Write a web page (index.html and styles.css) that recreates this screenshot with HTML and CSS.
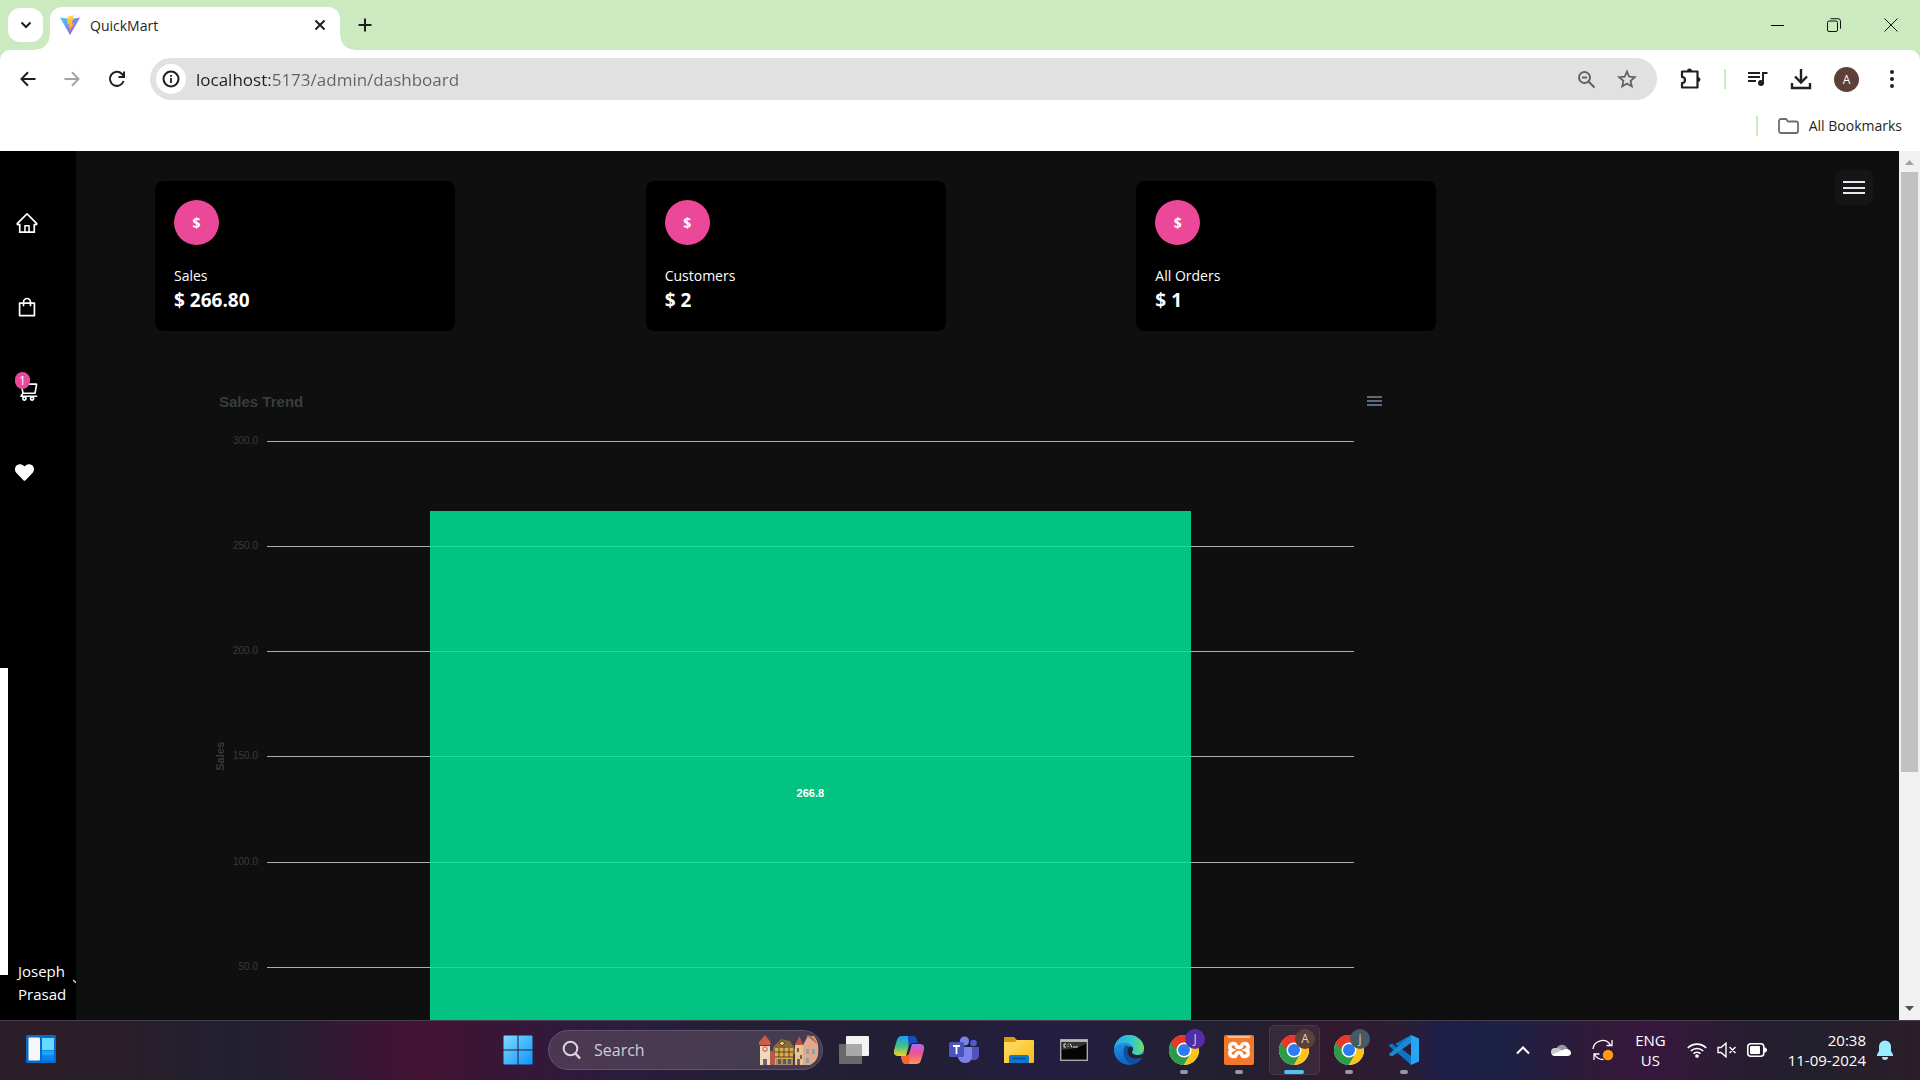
FILE: index.html
```html
<!DOCTYPE html>
<html lang="en">
<head>
<meta charset="utf-8">
<meta name="viewport" content="width=device-width, initial-scale=1">
<title>QuickMart</title>
<link rel="stylesheet" href="styles.css">
</head>
<body>
<svg class="defs" aria-hidden="true">
  <defs>
    <linearGradient id="viteBody" x1="0" y1="0" x2="1" y2="1"><stop offset="0" stop-color="#41d1ff"/><stop offset="1" stop-color="#bd34fe"/></linearGradient>
    <linearGradient id="viteBolt" x1="0" y1="0" x2="0" y2="1"><stop offset="0" stop-color="#ffea83"/><stop offset=".3" stop-color="#ffc91f"/><stop offset="1" stop-color="#ffa800"/></linearGradient>
    <linearGradient id="winGrad" x1="0" y1="0" x2="1" y2="1"><stop offset="0" stop-color="#7fdcff"/><stop offset="1" stop-color="#0a94fb"/></linearGradient>
    <linearGradient id="copilotLeft" x1="0" y1="0" x2="0" y2="1"><stop offset="0" stop-color="#1b9df0"/><stop offset=".5" stop-color="#3fbf8f"/><stop offset="1" stop-color="#f5d21c"/></linearGradient>
    <linearGradient id="copilotRight" x1="0" y1="0" x2="0" y2="1"><stop offset="0" stop-color="#b266f0"/><stop offset=".5" stop-color="#f0558a"/><stop offset="1" stop-color="#fd9a5a"/></linearGradient>
    <linearGradient id="folderGrad" x1="0" y1="0" x2="1" y2="1"><stop offset="0" stop-color="#ffe06a"/><stop offset="1" stop-color="#fbb917"/></linearGradient>
    <linearGradient id="edgeTop" x1="0" y1="0" x2="1" y2="0"><stop offset="0" stop-color="#2aa8e8"/><stop offset=".6" stop-color="#32c6cf"/><stop offset="1" stop-color="#6be35c"/></linearGradient>
    <linearGradient id="edgeSide" x1="0" y1="0" x2="0" y2="1"><stop offset="0" stop-color="#2aa3ea"/><stop offset="1" stop-color="#0a62c4"/></linearGradient>
    <symbol id="chrome" viewBox="0 0 48 48">
      <circle cx="24" cy="24" r="24" fill="#fff"/>
      <path d="M24 24 3.2 12A24 24 0 0 1 44.8 12Z" fill="#e8382b"/>
      <path d="M3.2 12A24 24 0 0 0 24 48L34.4 30 24 24Z" fill="#2d9c4a"/>
      <path d="M44.8 12A24 24 0 0 1 24 48L34.4 30 24 12Z" fill="#fcc419"/>
      <path d="M3.2 12 13.6 30 24 24 24 12Z" fill="#2d9c4a"/>
      <path d="M3.2 12A24 24 0 0 1 44.8 12H24L13.6 18 9 21Z" fill="#e8382b"/>
      <circle cx="24" cy="24" r="12" fill="#fff"/>
      <circle cx="24" cy="24" r="9.6" fill="#2d7bee"/>
    </symbol>
  </defs>
</svg>

<header class="browser">
  <div class="tab-strip">
    <button class="tab-search" aria-label="Search tabs"><svg width="12" height="12" viewBox="0 0 12 12"><path d="M1.500 3.500 6 8l4.500-4.500" fill="none" stroke="#1f1f1f" stroke-width="2"/></svg></button>
    <div class="tab">
      <svg width="20" height="20" viewBox="0 0 20 20"><path d="M0 2.500 10 20 20 2.500 11 4Z" fill="url(#viteBody)"/><path d="m14.500 0-7 1.400L7 9.500l2.300-.5-.7 3.400 1.700-.5-1 4.800 4.700-8.400-2.400.5Z" fill="url(#viteBolt)"/></svg>
      <span class="tab-title">QuickMart</span>
      <button class="plain" aria-label="Close tab"><svg width="12" height="12" viewBox="0 0 12 12"><path d="m1.500 1.500 9 9m0-9-9 9" stroke="#1f1f1f" stroke-width="2"/></svg></button>
    </div>
    <button class="plain new-tab" aria-label="New tab"><svg width="14" height="14" viewBox="0 0 14 14"><path d="M7 .5v13M.5 7h13" stroke="#1f1f1f" stroke-width="2"/></svg></button>
    <div class="window-controls">
      <button class="plain" aria-label="Minimise"><svg width="13" height="13" viewBox="0 0 13 13"><path d="M0 6.500h13" stroke="#000"/></svg></button>
      <button class="plain" aria-label="Restore"><svg width="14" height="14" viewBox="0 0 14 14" fill="none" stroke="#111"><rect x=".5" y="3" width="10" height="10.500" rx="1.500"/><path d="M3.500.7h7.500a2.500 2.500 0 0 1 2.500 2.500v7.500"/></svg></button>
      <button class="plain" aria-label="Close"><svg width="14" height="14" viewBox="0 0 14 14"><path d="m.5.5 13 13m0-13-13 13" stroke="#111"/></svg></button>
    </div>
  </div>

  <div class="toolbar">
    <nav class="nav-buttons" aria-label="Navigation">
      <button class="plain" aria-label="Back"><svg width="16" height="16" viewBox="0 0 16 16" fill="none" stroke="#1f1f1f" stroke-width="2"><path d="M15.500 8H2M8 1.300 1.500 8 8 14.700"/></svg></button>
      <button class="plain" aria-label="Forward" disabled><svg width="16" height="16" viewBox="0 0 16 16" fill="none" stroke="#a3a3a3" stroke-width="2"><path d="M.5 8H14M8 1.300 14.500 8 8 14.700"/></svg></button>
      <button class="plain" aria-label="Reload"><svg width="18" height="18" viewBox="0 0 18 18" fill="none" stroke="#1f1f1f" stroke-width="2"><path d="M15.600 11A7 7 0 1 1 14 4l1.500 1.700M16 1.500V7h-5.500"/></svg></button>
    </nav>
    <div class="address">
      <button class="site-info" aria-label="Site information"><svg width="18" height="18" viewBox="0 0 18 18"><circle cx="9" cy="9" r="7.500" fill="none" stroke="#1f1f1f" stroke-width="2"/><path d="M9 8v5M9 5v1.700" stroke="#1f1f1f" stroke-width="1.800"/></svg></button>
      <input class="url" type="text" aria-label="Address" value="localhost:5173/admin/dashboard">
      <button class="plain" aria-label="Zoom"><svg width="19" height="19" viewBox="0 0 19 19" fill="none" stroke="#5f6368" stroke-width="2"><circle cx="7.500" cy="7.500" r="5.500"/><path d="m11.500 11.500 6 6M5 7.500h5"/></svg></button>
      <button class="plain" aria-label="Bookmark this tab"><svg width="20" height="20" viewBox="0 0 20 20" fill="none" stroke="#5f6368" stroke-width="1.800"><path d="m10 2.500 2.200 5.200 5.600.5-4.200 3.700 1.200 5.500L10 14.500l-4.800 2.900 1.200-5.500-4.200-3.700 5.600-.5Z"/></svg></button>
    </div>
    <div class="tools">
      <button class="plain" aria-label="Extensions"><svg width="22" height="22" viewBox="0 0 22 22"><path d="M2 3.500h15.500V19.500H2V15a3 3 0 0 0 0-6Z" fill="none" stroke="#1f1f1f" stroke-width="2.200" stroke-linejoin="round"/><path d="M7 3a2.500 2.500 0 0 1 5 0ZM18 9a2.500 2.500 0 0 1 0 5Z" fill="#1f1f1f"/></svg></button>
      <span class="divider"></span>
      <button class="plain" aria-label="Media controls"><svg width="20" height="18" viewBox="0 0 20 18"><path d="M0 3h12M0 7h12M0 11h8M15 13V3h4.500" fill="none" stroke="#1f1f1f" stroke-width="2"/><circle cx="13" cy="13" r="3" fill="#1f1f1f"/></svg></button>
      <button class="plain" aria-label="Downloads"><svg width="22" height="22" viewBox="0 0 22 22" fill="none" stroke="#1f1f1f" stroke-width="2.400"><path d="M11 1v13M5 8.500l6 6 6-6M2 15v5h18v-5"/></svg></button>
      <button class="avatar" aria-label="Profile">A</button>
      <button class="plain" aria-label="Menu"><svg width="22" height="20" viewBox="-9 0 22 20" fill="#1f1f1f"><circle cx="2" cy="3" r="2"/><circle cx="2" cy="10" r="2"/><circle cx="2" cy="17" r="2"/></svg></button>
    </div>
  </div>

  <div class="bookmarks">
    <span class="divider"></span>
    <button class="plain bookmarks-button"><svg width="21" height="16" viewBox="0 0 21 16"><path d="M1 3a2 2 0 0 1 2-2h5l2 2.500h8a2 2 0 0 1 2 2V13a2 2 0 0 1-2 2H3a2 2 0 0 1-2-2Z" fill="none" stroke="#6b6e73" stroke-width="1.800"/></svg>All Bookmarks</button>
  </div>
</header>

<div class="viewport">
  <aside class="sidebar">
    <nav class="side-nav" aria-label="Shop">
      <a href="#home" aria-label="Home"><svg width="24" height="24" viewBox="0 0 1024 1024" fill="#fff"><path d="M946.500 505L560.100 118.800l-25.900-25.900a31.500 31.500 0 0 0-44.400 0L77.500 505a63.900 63.900 0 0 0-18.800 46c.4 35.200 29.700 63.300 64.900 63.300h42.500V940h691.800V614.300h43.400c17.100 0 33.200-6.700 45.300-18.800a63.600 63.600 0 0 0 18.700-45.300c0-17-6.700-33.100-18.800-45.200zM568 868H456V664h112v204zm217.900-325.700V868H632V640c0-22.100-17.900-40-40-40H432c-22.100 0-40 17.900-40 40v228H238.100V542.300h-96l370-369.700 23.100 23.100L882 542.300h-96.100z"/></svg></a>
      <a href="#shop" aria-label="Shop"><svg width="24" height="24" viewBox="0 0 1024 1024" fill="#fff"><path d="M832 312H696v-16c0-101.600-82.400-184-184-184s-184 82.400-184 184v16H192c-17.700 0-32 14.300-32 32v536c0 17.700 14.300 32 32 32h640c17.700 0 32-14.300 32-32V344c0-17.700-14.300-32-32-32zm-432-16c0-61.900 50.100-112 112-112s112 50.100 112 112v16H400v-16zm392 544H232V384h96v88c0 4.400 3.600 8 8 8h56c4.400 0 8-3.600 8-8v-88h224v88c0 4.400 3.600 8 8 8h56c4.400 0 8-3.600 8-8v-88h96v456z"/></svg></a>
      <a href="#cart" aria-label="Cart"><svg width="24" height="24" viewBox="0 0 1024 1024" fill="#fff"><path d="M922.900 701.900H327.400l29.900-60.900 496.800-.9c16.800 0 31.200-12 34.200-28.600l68.800-385.100c1.800-10.100-.9-20.500-7.500-28.400a35 35 0 0 0-26.600-12.500l-632-2.100-5.400-25.400c-3.400-16.200-18-28-34.600-28H96.500a35.300 35.300 0 1 0 0 70.600h125.900L246 312.800l58.100 281.300-74.800 122.100a35 35 0 0 0-3 36.800c6 11.900 18.100 19.400 31.500 19.400h62.800a102.400 102.400 0 0 0-20.600 61.700c0 56.600 46 102.600 102.600 102.600s102.600-46 102.600-102.600c0-22.300-7.400-44-20.600-61.700h161.100a102.400 102.400 0 0 0-20.600 61.700c0 56.600 46 102.600 102.600 102.600s102.600-46 102.600-102.600c0-22.300-7.400-44-20.600-61.700H923c19.400 0 35.300-15.800 35.300-35.300a35.400 35.400 0 0 0-35.400-35.200zM305.700 253l575.800 1.900-56.400 315.800-452.300.8L305.700 253zm96.900 612.700c-17.400 0-31.600-14.200-31.600-31.600 0-17.400 14.200-31.600 31.600-31.600s31.600 14.200 31.600 31.600a31.600 31.600 0 0 1-31.600 31.600zm325.100 0c-17.400 0-31.600-14.200-31.600-31.600 0-17.400 14.200-31.600 31.600-31.600s31.600 14.200 31.600 31.600a31.600 31.600 0 0 1-31.600 31.600z"/></svg><span class="cart-count">1</span></a>
      <a href="#favorites" aria-label="Favorites"><svg width="19" height="19" viewBox="0 0 512 512" fill="#fff"><path d="M462.300 62.600C407.500 15.900 326 24.300 275.700 76.200L256 96.500l-19.700-20.300C186.100 24.300 104.500 15.900 49.700 62.600c-62.800 53.600-66.100 149.800-9.900 207.900l193.500 199.800c12.500 12.900 32.800 12.900 45.300 0l193.500-199.800c56.300-58.100 53-154.300-9.800-207.900z"/></svg></a>
    </nav>
    <button class="user"><span>Joseph Prasad</span><svg width="16" height="16" viewBox="0 0 16 16"><path d="m2 5 6 5 6-5" fill="none" stroke="#ccc" stroke-width="1.400"/></svg></button>
    <div class="side-panel"></div>
  </aside>

  <main class="dashboard">
    <div class="top-row">
      <section class="cards" aria-label="Totals">
        <article class="card"><span class="coin">$</span><h2>Sales</h2><p>$ 266.80</p></article>
        <article class="card"><span class="coin">$</span><h2>Customers</h2><p>$ 2</p></article>
        <article class="card"><span class="coin">$</span><h2>All Orders</h2><p>$ 1</p></article>
      </section>
      <button class="page-menu" aria-label="Admin menu"><svg width="22" height="14" viewBox="0 0 22 14"><path d="M0 1h22M0 7h22M0 12h22" stroke="#e2e8f0" stroke-width="2"/></svg></button>
    </div>

    <section class="chart" aria-label="Sales Trend">
      <div class="chart-head">
        <h3>Sales Trend</h3>
        <button class="plain" aria-label="Chart menu"><svg width="15" height="10" viewBox="0 0 15 10"><path d="M0 1h15M0 5h15M0 9h15" stroke="#5b6b79" stroke-width="2"/></svg></button>
      </div>
      <div class="chart-body">
        <span class="axis-title">Sales</span>
        <ul class="axis">
          <li>300.0</li><li>250.0</li><li>200.0</li><li>150.0</li><li>100.0</li><li>50.0</li>
        </ul>
        <div class="plot">
          <i></i><i></i><i></i><i></i><i></i><i></i>
          <div class="bar" style="height: 88.93%"><span>266.8</span></div>
        </div>
      </div>
    </section>
  </main>

  <div class="scrollbar" aria-hidden="true">
    <svg width="21" height="21" viewBox="0 0 21 21"><path d="m6 14 4.500-5 4.500 5Z" fill="#a3a3a3"/></svg>
    <div class="track"><div class="thumb"></div></div>
    <svg width="21" height="21" viewBox="0 0 21 21"><path d="m6 7 4.500 5L15 7Z" fill="#505050"/></svg>
  </div>
</div>

<footer class="taskbar">
  <div class="widgets">
    <button class="plain" aria-label="Widgets"><svg width="30" height="28" viewBox="0 0 30 28"><rect width="30" height="28" rx="1.500" fill="#0a6ac8"/><rect x="2.500" y="2.500" width="11.500" height="23" rx="1" fill="#f7f7f7"/><path d="M16 3h12v12H16Z" fill="#67d8ff"/><path d="M16 15.500h12v5H16Z" fill="#19a5fb"/><path d="M16 21h12v4.500H16Z" fill="#0a84ee"/></svg></button>
  </div>
  <div class="apps">
    <button class="app" aria-label="Start"><svg width="30" height="30" viewBox="0 0 30 30"><path d="M1.500.5H14.500V14.500H.5V1.500a1 1 0 0 1 1-1ZM15.500.5h13a1 1 0 0 1 1 1V14.500h-14ZM.5 15.500h14v14H1.500a1 1 0 0 1-1-1ZM15.500 15.500h14v13a1 1 0 0 1-1 1h-13Z" fill="url(#winGrad)"/></svg></button>
    <label class="search">
      <svg width="20" height="20" viewBox="0 0 20 20" fill="none" stroke="#d8d5dc" stroke-width="2"><circle cx="8.500" cy="8.500" r="6.800"/><path d="m13.500 13.500 4.500 5" stroke-width="2.600"/></svg>
      <input type="search" placeholder="Search" aria-label="Search">
      <svg width="60" height="30" viewBox="0 0 60 30">
        <path d="M1 11h10v19H1Z" fill="#efd9bd"/><path d="m0 7 6-7 5.500 7v3H0Z" fill="#cf5b4b"/><circle cx="6" cy="14" r="2.700" fill="#d2704d"/><circle cx="6" cy="14" r="1.400" fill="#f8eee0"/><path d="M4 24h4v6H4Z" fill="#6f6470"/>
        <path d="M11 16h5v14h-5Z" fill="#b55a4d"/><path d="m14 12 8-8 9 2 5 8v5H14Z" fill="#8a6a3a"/><path d="M16 13h18v17H16Z" fill="#d9ae4a"/><path d="M16 17h18M16 22h18M20 13v9M25 12v10M30 13v9M20 8l3-2 3 2-3 3Z" stroke="#5a4327" fill="#e9c877"/><path d="M17 24h17v6H17Z" fill="#b98463"/><path d="M19 24h3v5h-3ZM24 24h3v5h-3ZM29 24h3v5h-3Z" fill="#44636a"/>
        <path d="M36 10h8v20h-8Z" fill="#e5c593"/><path d="m36 10 4.500-9L44 10Z" fill="#c65045"/><path d="M38 13h2v4h-2ZM41 20h2v4h-2ZM38 24h3v6h-3Z" fill="#7d5a4b"/>
        <path d="M44 10 49 1h6c4 5 5 11 4 19-1 5-4 8-8 10h-7Z" fill="#e3a78d"/><path d="m44 13 4-12 10 8C56 3 52 0 48 0Z" fill="#a97257"/><path d="M47 14h3v5h-3ZM53 14h3v5h-3ZM47 23h3v5h-3Z" fill="#8ba2a5"/>
      </svg>
    </label>
    <button class="app" aria-label="Task view"><svg width="30" height="28" viewBox="0 0 30 28"><rect x="7" width="23" height="20" rx="1" fill="#f3f3f3"/><rect y="8" width="23" height="20" rx="1" fill="#696969"/><path d="M7 8h16v12H7Z" fill="#a9a9a9"/></svg></button>
    <button class="app" aria-label="Copilot"><svg width="30" height="28" viewBox="0 0 30 28"><path d="M8 0h10c2.500 0 3.500 1.500 4.200 4l.6 3h-4.500c-2 0-3 1-3.600 3L12 20H4c-3.500 0-5-2.500-3.800-6.500l2.600-9C3.600 1.500 5 0 8 0Z" fill="url(#copilotLeft)"/><path d="M14 0h5c2.300 0 3.300 1.500 4 4l.8 3H18c-2 0-3 1-3.600 3Z" fill="#174bc0"/><path d="M22 28H12c-2.500 0-3.500-1.500-4.200-4L7 20h4.700c2 0 3-1 3.600-3L18 8h8c3.500 0 5 2.500 3.800 6.500l-2.600 9C26.400 26.500 25 28 22 28Z" fill="url(#copilotRight)"/><path d="M15 28h-3c-2.500 0-3.500-1.500-4.200-4L7 20h4.700c2 0 3-1 3.600-3l.7 3Z" fill="#f4652f"/></svg></button>
    <button class="app" aria-label="Teams"><svg width="30" height="28" viewBox="0 0 30 28"><circle cx="24.500" cy="7" r="3.300" fill="#5059c9"/><path d="M20 11h8.500c1 0 1.500.5 1.500 1.500V19c0 3-2 5-5 5h-5Z" fill="#4f52c0"/><circle cx="15.500" cy="5" r="4.600" fill="#7b83eb"/><path d="M10 11h13v9c0 4.500-3 7-7 7s-7-3-7-7Z" fill="#7b83eb"/><rect y="6" width="15" height="15" rx="1.500" fill="#4b53bc"/><path d="M4 10h7M7.500 10v8" stroke="#fff" stroke-width="1.800"/></svg></button>
    <button class="app" aria-label="File Explorer"><svg width="30" height="28" viewBox="0 0 30 28"><path d="M0 2a1 1 0 0 1 1-1h9l3 3h15v8H0Z" fill="#dd9b07"/><path d="M0 6h11l2-2h16a1 1 0 0 1 1 1v21a1 1 0 0 1-1 1H0Z" fill="url(#folderGrad)"/><path d="M5 27v-6c0-1.200.8-2 2-2h16c1.200 0 2 .8 2 2v6Z" fill="#0a7ad0"/><path d="M8 22.500h14" stroke="#0d4c8c" stroke-width="1.500"/></svg></button>
    <button class="app" aria-label="Command Prompt"><svg width="28" height="22" viewBox="0 0 28 22"><rect x=".7" y=".7" width="26.600" height="20.600" fill="#050505" stroke="#a9a9ab" stroke-width="1.400"/><path d="M1 2h26" stroke="#d8d8d8" stroke-width="1.600"/><path d="M2 11c8-1 16-2 24-6V3H2Z" fill="#333"/><path d="M6 5H4v3h2M8 5v1m0 1v1M10 4.500l2 4M13 8h5" stroke="#ddd" fill="none"/></svg></button>
    <button class="app" aria-label="Edge"><svg width="30" height="30" viewBox="0 0 30 30"><circle cx="15" cy="15" r="15" fill="url(#edgeSide)"/><path d="M0 14C1 6 7 0 15 0s15 6 15 13c0 4-3 7-7 7-3 0-5-1-5-2.500s1-1.500 1-4C19 10 15 8 11 8 6 8 2 10 0 14Z" fill="url(#edgeTop)"/><path d="M11 11c-4 7 0 17 8 18.500 4-1 7-3 9-6.500-3 1.500-8 2-11-.5-4-3-4-8-1-11-2-1-3.500-1-5-.5Z" fill="#0c4fa3"/><path d="M15.500 12c-3 3-2.500 8 1.500 10.500 3 2 8 1.500 10.500.3 1-.6 1.200.1.800.7l1.700-5C28 20 26 20 23 20c-3 0-5-1-5-2.500s1-1.500 1-4c0-1.200-2-2-3.500-1.500Z" fill="#232030"/></svg></button>
    <button class="app" aria-label="Chrome, profile J"><svg width="30" height="30"><use href="#chrome"/></svg><span class="profile violet">J</span><span class="mark"></span></button>
    <button class="app" aria-label="XAMPP"><svg width="30" height="30" viewBox="0 0 30 30"><rect width="30" height="30" rx="2" fill="#f5782a"/><path d="M4 1h22v2H4Z" fill="#fbbd90"/><path d="M9.500 8.500c4 0 1.500 4 5.500 4s1.500-4 5.500-4 5 5 1.500 6.500c3.500 1.500 2.500 6.500-1.500 6.500s-1.500-4-5.500-4-1.500 4-5.500 4-5-5-1.500-6.500C4.500 13.500 5.500 8.500 9.500 8.500Z" fill="none" stroke="#fff" stroke-width="3.600"/></svg><span class="mark"></span></button>
    <button class="app active" aria-label="Chrome, profile A"><svg width="30" height="30"><use href="#chrome"/></svg><span class="profile brown">A</span><span class="mark"></span></button>
    <button class="app" aria-label="Chrome, profile j"><svg width="30" height="30"><use href="#chrome"/></svg><span class="profile slate">j</span><span class="mark"></span></button>
    <button class="app" aria-label="Visual Studio Code"><svg width="30" height="30" viewBox="0 0 30 30"><path d="M22 0 8.500 13 3 8.500 0 10v1l19 16 3 3V21L6 9Z" fill="#0b74c4"/><path d="M0 19v1l3 1.500L22 8V0L0 19Z" fill="#1789d6"/><path d="m22 0 8 3.500v23L22 30Z" fill="#28a5f2"/></svg><span class="mark"></span></button>
  </div>
  <div class="tray">
    <button class="plain" aria-label="Show hidden icons"><svg width="14" height="10" viewBox="0 0 14 10"><path d="m1 8.500 6-6 6 6" fill="none" stroke="#fff" stroke-width="2"/></svg></button>
    <button class="plain" aria-label="OneDrive"><svg width="20" height="14" viewBox="0 0 20 14"><path d="M5 7a6 6 0 0 1 11-2.500L18 9H5Z" fill="#9b95a3"/><path d="M4 13a4 4 0 0 1 0-8c3-.5 6 1 9 3l2 5Z" fill="#c9c6ce"/><path d="M5 13c-1.500 0-3-.5-4-1.500L12 7c3-2 8-.5 8 3 0 2-1.500 3-3.500 3Z" fill="#fff"/></svg></button>
    <button class="plain" aria-label="Updates"><svg width="22" height="22" viewBox="0 0 22 22"><path d="M1 10A9.500 9.500 0 0 1 18.500 6M20 1v5.500h-5.500M2 21v-6h5.500M2.500 15.500c2 3.500 5 5 9 5" fill="none" stroke="#fff" stroke-width="1.300"/><circle cx="16" cy="16" r="5.200" fill="#ff9a0b"/></svg></button>
    <button class="plain language">ENG<br>US</button>
    <button class="plain quick" aria-label="Network, sound and battery">
      <svg width="20" height="16" viewBox="0 0 20 16" fill="none" stroke="#fff" stroke-width="1.700"><path d="M.8 6a13 13 0 0 1 18.400 0M3.800 9a9 9 0 0 1 12.400 0M6.500 11.700a5 5 0 0 1 7 0"/><circle cx="10" cy="14" r="1" fill="#fff"/></svg>
      <svg width="20" height="16" viewBox="0 0 20 16" fill="none" stroke="#fff" stroke-width="1.400"><path d="M1 5.500h3L9 1.200v13.600L4 10.500H1ZM12.500 5l6 6m0-6-6 6"/></svg>
      <svg width="20" height="14" viewBox="0 0 20 14"><rect x=".8" y=".8" width="16" height="12.400" rx="3" fill="none" stroke="#fff" stroke-width="1.600"/><rect x="3" y="3" width="10" height="8" rx="1" fill="#fff"/><path d="M17.500 5c1.500 0 2 .5 2 2s-.5 2-2 2Z" fill="#fff" stroke="#fff"/></svg>
    </button>
    <button class="plain clock"><time>20:38<br>11-09-2024</time><svg width="16" height="20" viewBox="0 0 16 20" fill="#99ebff"><path d="M8 .5a6 6 0 0 1 6 6V11l2 3.500V16H0v-1.500L2 11V6.500a6 6 0 0 1 6-6ZM5 17h6a3 3 0 0 1-6 0Z"/></svg></button>
  </div>
</footer>
</body>
</html>
```
FILE: styles.css
```css
* { box-sizing: border-box; }

body {
  margin: 0;
  height: 100vh;
  display: flex;
  flex-direction: column;
  overflow: hidden;
  background: #0f0f0f;
  font-family: "Open Sans", "Noto Sans", sans-serif;
  font-size: 14px;
  color: #1f1f1f;
}

h2, h3, p, ul { margin: 0; padding: 0; }
svg { display: block; flex: none; }
.defs { position: absolute; width: 0; height: 0; }

button, input {
  font: inherit;
  color: inherit;
  border: 0;
  padding: 0;
  background: none;
}

.plain { display: flex; align-items: center; justify-content: center; }

/* Browser window */
.browser { background: #cbeabf; flex: none; }

.tab-strip {
  height: 50px;
  padding-left: 8px;
  display: flex;
  align-items: center;
}

.tab-search {
  position: relative;
  z-index: 1;
  width: 35px;
  height: 34px;
  border-radius: 12px;
  background: #fff;
  display: flex;
  align-items: center;
  justify-content: center;
}

.tab {
  position: relative;
  align-self: flex-end;
  width: 290px;
  height: 43px;
  margin-left: 7px;
  padding: 0 14px 7px 10px;
  display: flex;
  align-items: center;
  gap: 10px;
  border-radius: 12px 12px 0 0;
  background: #fff;
}

.tab::before, .tab::after {
  content: "";
  position: absolute;
  bottom: 0;
  width: 14px;
  height: 14px;
}
.tab::before { right: 100%; background: radial-gradient(circle at 0 0, #cbeabf 13px, #fff 14px); }
.tab::after { left: 100%; background: radial-gradient(circle at 100% 0, #cbeabf 13px, #fff 14px); }
.tab-title { flex: 1; }
.new-tab { margin-left: 18px; }

.window-controls {
  margin-left: auto;
  padding-right: 22px;
  display: flex;
  gap: 43px;
}

.toolbar {
  height: 58px;
  padding: 0 17px 0 20px;
  display: flex;
  align-items: center;
  border-radius: 10px 10px 0 0;
  background: #fff;
}

.nav-buttons { display: flex; gap: 28px; width: 130px; }

.address {
  flex: 1;
  height: 42px;
  padding: 0 20px 0 6px;
  display: flex;
  align-items: center;
  gap: 21px;
  border-radius: 21px;
  background: #e1e1e1;
}

.site-info {
  width: 30px;
  height: 30px;
  margin-right: -11px;
  border-radius: 50%;
  background: #fff;
  display: flex;
  align-items: center;
  justify-content: center;
}

.url {
  flex: 1;
  font-size: 17px;
  background: linear-gradient(90deg, #1f1f1f 74px, #5f6368 74px);
  background-clip: text;
  -webkit-text-fill-color: transparent;
}

.tools { display: flex; align-items: center; gap: 22px; padding-left: 23px; }
.divider { width: 2px; height: 20px; background: #cbeabf; }

.avatar {
  width: 25px;
  height: 25px;
  border-radius: 50%;
  background: #5d4037;
  color: #fff;
  font-size: 12px;
}

.bookmarks {
  height: 43px;
  padding: 0 18px 8px;
  display: flex;
  align-items: center;
  justify-content: flex-end;
  gap: 20px;
  background: #fff;
}
.bookmarks-button { gap: 10px; }

/* Page */
.viewport { flex: 1; min-height: 0; display: flex; }

.sidebar {
  position: relative;
  flex: none;
  width: 76px;
  padding: 60px 0 14px 15px;
  overflow: hidden;
  display: flex;
  flex-direction: column;
  justify-content: space-between;
  background: #000;
  color: #fff;
}

.side-nav { display: flex; flex-direction: column; gap: 60px; align-items: flex-start; }
.side-nav a { position: relative; }

.cart-count {
  position: absolute;
  left: 0;
  top: -7px;
  width: 15px;
  height: 17px;
  border-radius: 8px;
  background: #ec4899;
  color: #fff;
  font-size: 12px;
  line-height: 17px;
  text-align: center;
}

.user {
  width: 80px;
  padding-left: 3px;
  display: flex;
  align-items: center;
  gap: 3px;
  font-size: 15px;
  line-height: 23px;
  text-align: left;
}
.user span { width: 50px; }

/* closed drawer whose edge shows beside the navigation */
.side-panel {
  position: absolute;
  left: 0;
  bottom: 45px;
  width: 8px;
  height: 307px;
  background: #fff;
}

.dashboard { flex: 1; min-width: 0; overflow: hidden; color: #fff; }

.top-row {
  display: flex;
  align-items: flex-start;
  gap: 208px;
  padding: 19px 26px 0 79px;
}

.cards {
  flex: 1;
  padding-top: 11px;
  display: grid;
  grid-template-columns: repeat(3, 1fr);
}

.card {
  max-width: 300px;
  height: 150px;
  padding: 19px;
  border-radius: 8px;
  background: #000;
}

.coin {
  display: flex;
  align-items: center;
  justify-content: center;
  width: 45px;
  height: 45px;
  margin-bottom: 19px;
  border-radius: 50%;
  background: #ec4899;
  font-weight: 700;
}

.card h2 { font-size: 14px; font-weight: 400; line-height: 24px; }
.card p { font-size: 19px; font-weight: 700; line-height: 24px; }

.page-menu {
  width: 38px;
  height: 35px;
  border-radius: 7px;
  background: #151515;
  display: flex;
  align-items: center;
  justify-content: center;
}

.chart {
  width: 64%;
  margin: 60px 0 0 139px;
  font-family: "Liberation Sans", Arial, sans-serif;
  color: #373d3f;
}

.chart-head {
  display: flex;
  align-items: center;
  justify-content: space-between;
  height: 20px;
  padding-left: 4px;
}
.chart-head h3 { font-size: 15px; font-weight: 700; }

.chart-body {
  display: grid;
  grid-template-columns: 10px 32px 1fr;
  column-gap: 5px;
  padding: 30px 28px 0 0;
  height: 661px;
}

.axis-title {
  place-self: center;
  writing-mode: vertical-rl;
  transform: rotate(180deg);
  font-size: 11px;
  line-height: 11px;
  font-weight: 700;
}

.axis {
  list-style: none;
  display: grid;
  grid-template-rows: repeat(6, 1fr);
  padding-right: 4px;
  font-size: 10px;
  line-height: 12px;
  text-align: right;
}
.axis li { margin-top: -6px; }

.plot {
  position: relative;
  display: grid;
  grid-template-rows: repeat(6, 1fr);
}
.plot i { border-top: 1px solid #adadad; }

.bar {
  position: absolute;
  left: 15%;
  bottom: 0;
  width: 70%;
  padding-top: 4px;
  display: flex;
  align-items: center;
  justify-content: center;
  background: rgba(0, 227, 150, 0.85);
  color: #fff;
  font-size: 11px;
  font-weight: 700;
}

.scrollbar {
  flex: none;
  width: 21px;
  display: flex;
  flex-direction: column;
  background: #f1f1f1;
}
.track { flex: 1; padding: 0 2px; }
.thumb { height: 72.6%; background: #c1c1c1; }

/* Taskbar */
.taskbar {
  flex: none;
  height: 60px;
  display: grid;
  grid-template-columns: 1fr auto 1fr;
  padding-bottom: 1px;
  border-top: 1px solid #47414f;
  background: linear-gradient(90deg, #2c1e28 0%, #2a1e29 6%, #222030 12%, #251f30 15%, #3a1536 19%, #431335 22%, #3a1536 25%, #2b1c40 32%, #241f35 39%, #221e37 49%, #241e42 55%, #22202f 64%, #301a2d 69%, #2b1d33 73%, #1f1e48 75%, #1c2145 78%, #301a39 83%, #38173e 86%, #271d30 91%, #22202d 94%, #2b1d29 100%);
  color: #fff;
}

.widgets { display: flex; align-items: center; padding: 0 0 2px 26px; }
.apps { display: flex; align-items: center; padding-left: 1px; }

.app {
  position: relative;
  width: 55px;
  height: 50px;
  display: flex;
  align-items: center;
  justify-content: center;
}
.app:first-child { margin-right: 3px; }

.search {
  width: 275px;
  height: 40px;
  margin-right: 3px;
  padding: 0 3px 0 13px;
  display: flex;
  align-items: center;
  gap: 12px;
  border: 1px solid #60566a;
  border-radius: 20px;
  background: linear-gradient(90deg, #4c3751, #433d52);
}
.search input { flex: 1; min-width: 0; font-size: 16px; }
.search input::placeholder { color: #d0ccd4; opacity: 1; }

.profile {
  position: absolute;
  right: 6px;
  top: 4px;
  width: 20px;
  height: 20px;
  border-radius: 50%;
  color: #d8d0d8;
  font-size: 12px;
  line-height: 20px;
}
.violet { background: #512da8; }
.brown { background: #5d4037; }
.slate { background: #455a64; }

.mark {
  position: absolute;
  left: 24px;
  bottom: 1px;
  width: 8px;
  height: 4px;
  border-radius: 2px;
  background: #9a97a0;
}

.active::before {
  content: "";
  position: absolute;
  inset: 0 1px 0 3px;
  border: 1px solid #45394a;
  border-radius: 5px;
  background: rgba(255, 255, 255, 0.06);
}
.active svg { position: relative; }
.active .mark { left: 18px; width: 20px; background: #4cc2ff; }

.tray {
  display: flex;
  align-items: center;
  justify-content: flex-end;
  padding-right: 27px;
  font-size: 15px;
  line-height: 20px;
}
.tray .plain { margin-left: 21px; }
.tray .quick { gap: 10px; }
.tray .clock { gap: 11px; text-align: right; }
```
